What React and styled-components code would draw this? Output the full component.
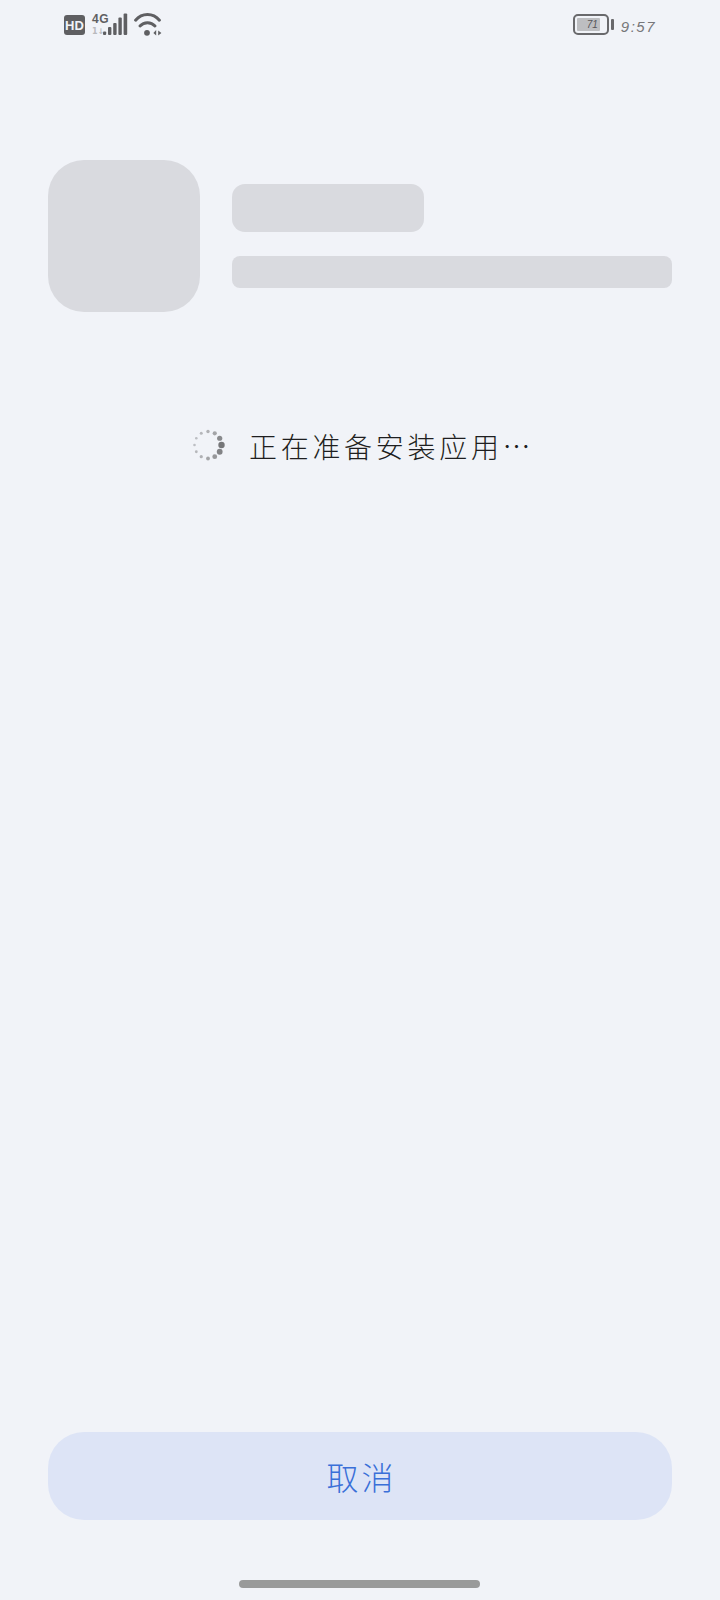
import React from "react";
import styled, { createGlobalStyle } from "styled-components";

const GlobalStyle = createGlobalStyle`
    html, body {
        margin: 0;
        padding: 0;
        background: #f1f3f8;
    }
`;

const SPINNER_DOTS = [
    { angle: 0, r: 3.2, o: 0.95 },
    { angle: 30, r: 2.9, o: 0.85 },
    { angle: 60, r: 2.4, o: 0.7 },
    { angle: 90, r: 1.9, o: 0.6 },
    { angle: 120, r: 1.6, o: 0.5 },
    { angle: 150, r: 1.4, o: 0.45 },
    { angle: 180, r: 1.3, o: 0.4 },
    { angle: 210, r: 1.3, o: 0.4 },
    { angle: 240, r: 1.5, o: 0.45 },
    { angle: 270, r: 1.7, o: 0.5 },
    { angle: 300, r: 2.1, o: 0.6 },
    { angle: 330, r: 2.6, o: 0.8 },
];

const Spinner = () => (
    <SpinnerSvg viewBox="0 0 34 34">
        {SPINNER_DOTS.map((dot) => {
            const rad = (dot.angle * Math.PI) / 180;
            return (
                <circle
                    key={dot.angle}
                    cx={17 + 13.5 * Math.cos(rad)}
                    cy={17 + 13.5 * Math.sin(rad)}
                    r={dot.r}
                    fill="#6f6f72"
                    opacity={dot.o}
                />
            );
        })}
    </SpinnerSvg>
);

const SignalIcon = () => (
    <svg width="25" height="23" viewBox="0 0 25 23">
        <rect x="0" y="18.5" width="3.2" height="3.5" rx="1" fill="#5f5f62" />
        <rect x="5" y="14" width="3.4" height="8" rx="1" fill="#5f5f62" />
        <rect x="10.2" y="10" width="3.4" height="12" rx="1" fill="#5f5f62" />
        <rect x="15.4" y="4.5" width="3.4" height="17.5" rx="1" fill="#5f5f62" />
        <rect x="20.6" y="0.5" width="3.6" height="21.5" rx="1" fill="#5f5f62" />
    </svg>
);

const WifiIcon = () => (
    <svg width="28" height="24" viewBox="0 0 28 24">
        <g fill="none" stroke="#5f5f62" strokeWidth="3" strokeLinecap="round">
            <path d="M1.6 7.2 C8 -0.4 19 -0.4 25.4 7.2" />
            <path d="M6 13 C10 8.6 17 8.6 21 13" />
        </g>
        <circle cx="13" cy="19.8" r="2.9" fill="#5f5f62" />
        <path d="M19.4 20 L22.2 17 L22.2 22.6 Z" fill="#5f5f62" />
        <path d="M27.4 20 L24.2 17.4 L24.2 22.6 Z" fill="#5f5f62" />
    </svg>
);

export default function App() {
    return (
        <Page>
            <GlobalStyle />
            <StatusBar>
                <StatusGroup>
                    <HdBadge>HD</HdBadge>
                    <NetworkStack>
                        <NetworkLabel>4G</NetworkLabel>
                        <NetworkArrows>1↓</NetworkArrows>
                    </NetworkStack>
                    <SignalWrap>
                        <SignalIcon />
                    </SignalWrap>
                    <WifiWrap>
                        <WifiIcon />
                    </WifiWrap>
                </StatusGroup>
                <StatusGroup>
                    <Battery>
                        <BatteryFill>
                            <BatteryLevel>71</BatteryLevel>
                        </BatteryFill>
                    </Battery>
                    <BatteryNub />
                    <Clock>9:57</Clock>
                </StatusGroup>
            </StatusBar>

            <AppHeader>
                <AppIcon />
                <AppInfo>
                    <AppName />
                    <AppDesc />
                </AppInfo>
            </AppHeader>

            <Progress>
                <Spinner />
                <ProgressText>正在准备安装应用…</ProgressText>
            </Progress>

            <Footer>
                <CancelButton>取消</CancelButton>
                <HomeBar />
            </Footer>
        </Page>
    );
}

const Page = styled.div`
    display: flex;
    flex-direction: column;
    width: 720px;
    height: 1600px;
    overflow: hidden;
    background: #f1f3f8;
    font-family: "Noto Sans CJK SC", "Noto Sans", sans-serif;
`;

const StatusBar = styled.div`
    display: flex;
    justify-content: space-between;
    align-items: flex-start;
    height: 36px;
    padding: 13px 64px 0 64px;
`;

const StatusGroup = styled.div`
    display: flex;
    align-items: flex-start;
`;

const HdBadge = styled.div`
    display: flex;
    align-items: center;
    justify-content: center;
    width: 21px;
    height: 20px;
    margin-top: 2px;
    border-radius: 3px;
    background: #5f5f62;
    color: #f1f3f8;
    font-family: "Liberation Sans", sans-serif;
    font-size: 13px;
    font-weight: 700;
`;

const NetworkStack = styled.div`
    display: flex;
    flex-direction: column;
    width: 14px;
    margin-left: 7px;
    font-family: "Liberation Sans", sans-serif;
`;

const NetworkLabel = styled.span`
    height: 14px;
    color: #5f5f62;
    font-size: 12px;
    font-weight: 700;
    line-height: 12px;
    letter-spacing: 0.5px;
`;

const NetworkArrows = styled.span`
    color: #b9babd;
    font-family: "DejaVu Sans", sans-serif;
    font-size: 8px;
    font-weight: 700;
    line-height: 10px;
    white-space: nowrap;
`;

const SignalWrap = styled.div`
    height: 23px;
    margin-left: -3px;
`;

const WifiWrap = styled.div`
    height: 24px;
    margin-left: 6px;
`;

const Battery = styled.div`
    box-sizing: border-box;
    width: 36px;
    height: 21px;
    margin-top: 1px;
    padding: 2px;
    border: 2px solid #69696c;
    border-radius: 5px;
`;

const BatteryFill = styled.div`
    display: flex;
    align-items: center;
    justify-content: flex-end;
    width: 23px;
    height: 100%;
    padding-right: 2px;
    box-sizing: border-box;
    background: #bdbec1;
    border-radius: 1px;
`;

const BatteryLevel = styled.span`
    color: #56565a;
    font-family: "Liberation Sans", sans-serif;
    font-size: 10px;
    font-style: italic;
    line-height: 1;
`;

const BatteryNub = styled.div`
    width: 3px;
    height: 11px;
    margin: 6px 0 0 2px;
    border-radius: 1px;
    background: #69696c;
`;

const Clock = styled.span`
    margin: 5px 0 0 7px;
    color: #77777a;
    font-family: "Liberation Sans", sans-serif;
    font-size: 15px;
    font-style: italic;
    letter-spacing: 1.5px;
    line-height: 18px;
`;

const AppHeader = styled.div`
    display: flex;
    align-items: flex-start;
    gap: 32px;
    margin-top: 111px;
    padding: 0 48px;
`;

const AppIcon = styled.div`
    flex: none;
    width: 152px;
    height: 152px;
    border-radius: 36px;
    background: #d9dadf;
`;

const AppInfo = styled.div`
    display: flex;
    flex: 1;
    flex-direction: column;
    gap: 24px;
    padding-top: 24px;
`;

const AppName = styled.div`
    width: 192px;
    height: 48px;
    border-radius: 13px;
    background: #d9dadf;
`;

const AppDesc = styled.div`
    height: 32px;
    border-radius: 8px;
    background: #d9dadf;
`;

const Progress = styled.div`
    display: flex;
    align-items: center;
    margin-top: 115px;
    padding-left: 191px;
`;

const SpinnerSvg = styled.svg`
    flex: none;
    width: 34px;
    height: 34px;
    margin-top: -3px;
`;

const ProgressText = styled.span`
    margin-left: 24px;
    color: #1e1e20;
    font-size: 28px;
    font-weight: 300;
    letter-spacing: 3.7px;
    line-height: 38px;
`;

const Footer = styled.div`
    display: flex;
    flex: 1;
    flex-direction: column;
    align-items: center;
    justify-content: flex-end;
    padding: 0 48px 12px;
`;

const CancelButton = styled.div`
    display: flex;
    align-items: center;
    justify-content: center;
    align-self: stretch;
    height: 88px;
    padding-left: 3px;
    border-radius: 36px;
    background: #dde4f6;
    color: #3a6fd8;
    font-size: 32px;
    font-weight: 300;
    letter-spacing: 3px;
`;

const HomeBar = styled.div`
    width: 241px;
    height: 8px;
    margin: 60px 2px 0 0;
    border-radius: 4px;
    background: #999a9a;
`;
